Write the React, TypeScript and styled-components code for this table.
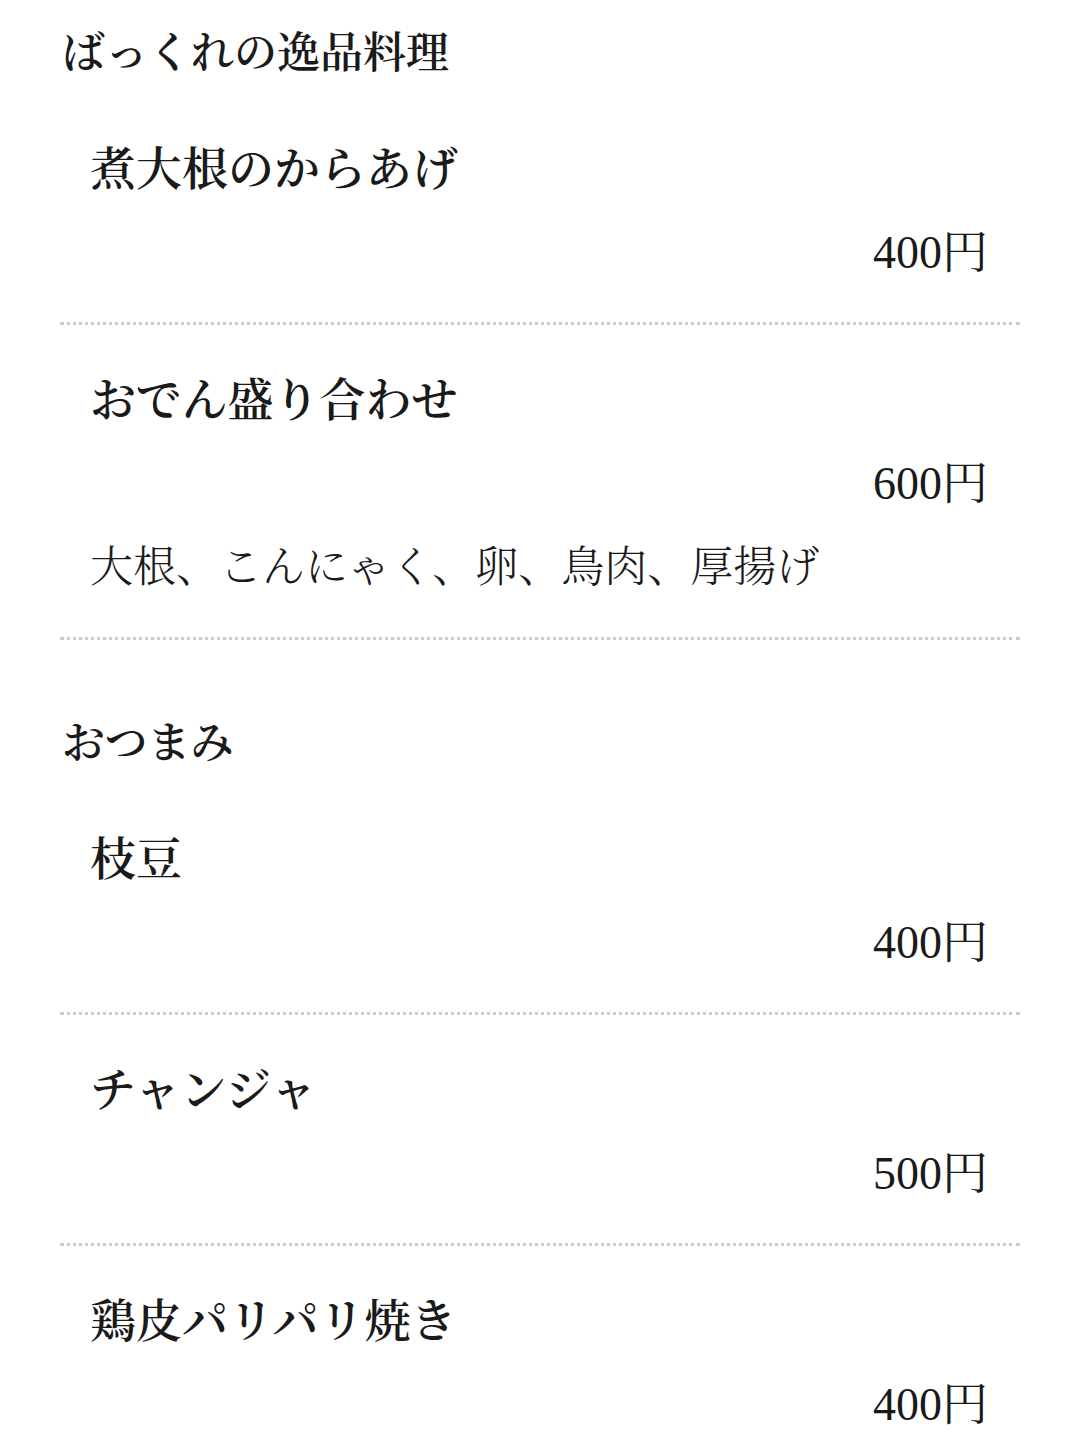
import styled, { createGlobalStyle } from 'styled-components'

const GlobalStyle = createGlobalStyle`
  body {
    margin: 0;
    background: #fff;
    color: #1a1a1a;
    font-family: "Liberation Serif", "Noto Serif CJK JP", "Noto Sans CJK JP", serif;
  }
`

const Page = styled.div`
  padding: 22px 60px 0;
`

const Section = styled.section`
  & + & {
    margin-top: 72px;
  }
`

const SectionTitle = styled.h2`
  margin: 0 0 8px 2px;
  font-size: 43px;
  line-height: 64px;
  font-weight: 600;
`

const Item = styled.div`
  padding: 44px 32px 37px 30px;
  border-bottom: 3px dotted #cccccc;
`

const Name = styled.h3`
  margin: 0;
  font-size: 46px;
  line-height: 64px;
  font-weight: 600;
`

const Price = styled.div`
  margin-top: 19px;
  text-align: right;
  font-size: 46px;
  line-height: 64px;
`

const Desc = styled.p`
  margin: 20px 0 0;
  font-size: 43px;
  line-height: 64px;
  font-weight: 300;
`

type MenuItem = { name: string; price: number; desc?: string }

const menu: { title: string; items: MenuItem[] }[] = [
  {
    title: 'ばっくれの逸品料理',
    items: [
      { name: '煮大根のからあげ', price: 400 },
      { name: 'おでん盛り合わせ', price: 600, desc: '大根、こんにゃく、卵、鳥肉、厚揚げ' },
    ],
  },
  {
    title: 'おつまみ',
    items: [
      { name: '枝豆', price: 400 },
      { name: 'チャンジャ', price: 500 },
      { name: '鶏皮パリパリ焼き', price: 400 },
    ],
  },
]

const App = () => {
  return (
    <>
      <GlobalStyle />
      <Page>
        {menu.map((section) => (
          <Section key={section.title}>
            <SectionTitle>{section.title}</SectionTitle>
            {section.items.map((item) => (
              <Item key={item.name}>
                <Name>{item.name}</Name>
                <Price>{item.price}円</Price>
                {item.desc && <Desc>{item.desc}</Desc>}
              </Item>
            ))}
          </Section>
        ))}
      </Page>
    </>
  )
}

export default App
